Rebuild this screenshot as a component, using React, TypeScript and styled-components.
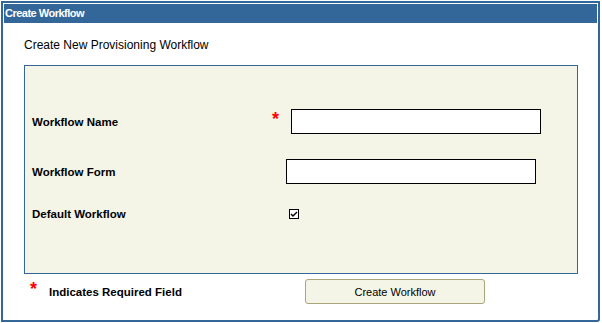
import * as React from 'react';
import styled, { createGlobalStyle } from 'styled-components';

const GlobalStyle = createGlobalStyle`
  body {
    margin: 0;
    background: #ffffff;
    font-family: "Liberation Sans", Arial, sans-serif;
  }
`;

const Frame = styled.div`
  box-sizing: border-box;
  margin: 1px 0 0 1px;
  width: 599px;
  height: 321px;
  border: 2px solid #336699;
  border-radius: 0 0 3px 0;
  padding: 1px;
`;

const Header = styled.div`
  height: 19px;
  background: #336699;
  color: #ffffff;
  font-size: 11px;
  font-weight: bold;
  letter-spacing: -0.5px;
  line-height: 19px;
  padding-left: 1px;
`;

const Body = styled.div`
  padding: 15px 0 0 20px;
`;

const Title = styled.div`
  font-size: 12px;
  color: #000;
  height: 14px;
  line-height: 14px;
  margin-bottom: 13px;
`;

const Panel = styled.div`
  box-sizing: border-box;
  width: 554px;
  height: 209px;
  border: 1px solid #336699;
  background: #f5f5e7;
  padding: 43px 0 0 7px;
  display: grid;
  grid-template-columns: 240px 1fr;
  grid-template-rows: 25px 25px 10px;
  row-gap: 25px;
  align-items: center;
`;

const Label = styled.div`
  font-size: 11.5px;
  font-weight: bold;
  color: #000;
`;

const Field = styled.div<{ $indent: number }>`
  display: flex;
  align-items: center;
  padding-left: ${(p) => p.$indent}px;
`;

const Star = styled.span`
  color: #ff0000;
  font-size: 18px;
  font-weight: bold;
  line-height: 10px;
  height: 10px;
  width: 8px;
  margin-right: 11px;
  align-self: flex-start;
  margin-top: 5px;
`;

const TextInput = styled.input`
  box-sizing: border-box;
  width: 250px;
  height: 25px;
  border: 1px solid #000;
  background: #fff;
  margin: 0;
  padding: 0 3px;
  outline: none;
`;

const Check = styled.span`
  box-sizing: border-box;
  width: 10px;
  height: 10px;
  border: 1px solid #000;
  background: #fff;
  display: flex;
  align-items: center;
  justify-content: center;
`;

const Footer = styled.div`
  display: flex;
  align-items: center;
  margin-top: 5px;
  width: 554px;
`;

const Note = styled.div`
  display: flex;
  align-items: center;
  padding-left: 6px;
  width: 275px;
  font-size: 11.5px;
  font-weight: bold;
  color: #000;
`;

const NoteStar = styled(Star)`
  margin-top: -2px;
  margin-right: 11px;
`;

const Button = styled.button`
  box-sizing: border-box;
  width: 180px;
  height: 25px;
  border: 1px solid #a8a57a;
  border-radius: 3px;
  background: #f5f5e7;
  font-family: "Liberation Sans", Arial, sans-serif;
  font-size: 11px;
  color: #000;
  padding: 0;
`;

const CheckMark = () => (
  <svg width="8" height="8" viewBox="0 0 8 8">
    <path d="M1 4 L3 6 L7 2" stroke="#000" strokeWidth="1.4" fill="none" />
  </svg>
);

const App: React.FC = () => (
  <>
    <GlobalStyle />
    <Frame>
      <Header>Create Workflow</Header>
      <Body>
        <Title>Create New Provisioning Workflow</Title>
        <Panel>
          <Label>Workflow Name</Label>
          <Field $indent={0}>
            <Star>*</Star>
            <TextInput />
          </Field>
          <Label>Workflow Form</Label>
          <Field $indent={14}>
            <TextInput />
          </Field>
          <Label>Default Workflow</Label>
          <Field $indent={17}>
            <Check>
              <CheckMark />
            </Check>
          </Field>
        </Panel>
        <Footer>
          <Note>
            <NoteStar>*</NoteStar>
            Indicates Required Field
          </Note>
          <Button>Create Workflow</Button>
        </Footer>
      </Body>
    </Frame>
  </>
);

export default App;
